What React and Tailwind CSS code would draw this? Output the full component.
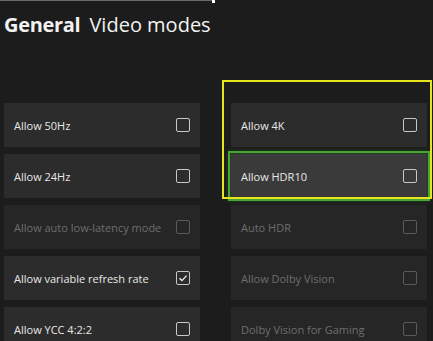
import React from "react";

function Check({ checked, disabled }) {
  return (
    <div
      className={`w-[14px] h-[14px] rounded-[2px] border-[1.5px] flex items-center justify-center ${
        disabled ? "border-[#5a5a5a]" : "border-[#c8c8c8]"
      }`}
    >
      {checked && (
        <svg width="10" height="10" viewBox="0 0 10 10">
          <polyline points="1.5,5.2 4,7.6 8.6,2.6" fill="none" stroke="#f0f0f0" strokeWidth="1.4" />
        </svg>
      )}
    </div>
  );
}

function Card({ label, checked, disabled, focused }) {
  return (
    <div
      className={`h-[44px] flex items-center justify-between pl-[10px] pr-[10px] ${
        focused
          ? "bg-[#3a3a3a] outline-2 outline-offset-[1px] outline-[#46a832] shadow-[0_0_6px_2px_rgba(70,168,50,0.35)]"
          : disabled
          ? "bg-[#262626]"
          : "bg-[#2c2c2c]"
      }`}
    >
      <span className={`text-[11px] leading-none ${disabled ? "text-[#6e6e6e]" : "text-[#e8e8e8]"}`}>{label}</span>
      <Check checked={checked} disabled={disabled} />
    </div>
  );
}

export default function App() {
  const left = [
    { label: "Allow 50Hz" },
    { label: "Allow 24Hz" },
    { label: "Allow auto low-latency mode", disabled: true },
    { label: "Allow variable refresh rate", checked: true },
    { label: "Allow YCC 4:2:2" },
  ];
  const right = [
    { label: "Allow 4K" },
    { label: "Allow HDR10", focused: true },
    { label: "Auto HDR", disabled: true },
    { label: "Allow Dolby Vision", disabled: true },
    { label: "Dolby Vision for Gaming", disabled: true },
  ];
  return (
    <div
      className="w-[433px] h-[341px] bg-[#1c1c1c] overflow-hidden relative"
      style={{ fontFamily: '"Open Sans", sans-serif' }}
    >
      <div className="flex items-start">
        <div className="h-px w-[212px] bg-[#6a6a6a]" />
        <div className="w-[3px] h-[3px] bg-white" />
      </div>
      <div className="pt-[12px] pl-[4px] flex items-baseline gap-[9px] text-[20px] leading-[20px] text-[#f2f2f2]">
        <span className="font-bold tracking-[-0.3px]">General</span>
        <span>Video modes</span>
      </div>
      <div className="mt-[68px] flex gap-[31px] pl-[4px]">
        <div className="w-[196px] flex flex-col gap-[7px]">
          {left.map((c) => (
            <Card key={c.label} {...c} />
          ))}
        </div>
        <div className="w-[196px] flex flex-col gap-[7px]">
          {right.map((c) => (
            <Card key={c.label} {...c} />
          ))}
        </div>
      </div>
      <div className="absolute left-[222px] top-[80px] w-[210px] h-[119px] border-2 border-[#e6e41c] pointer-events-none" />
    </div>
  );
}
